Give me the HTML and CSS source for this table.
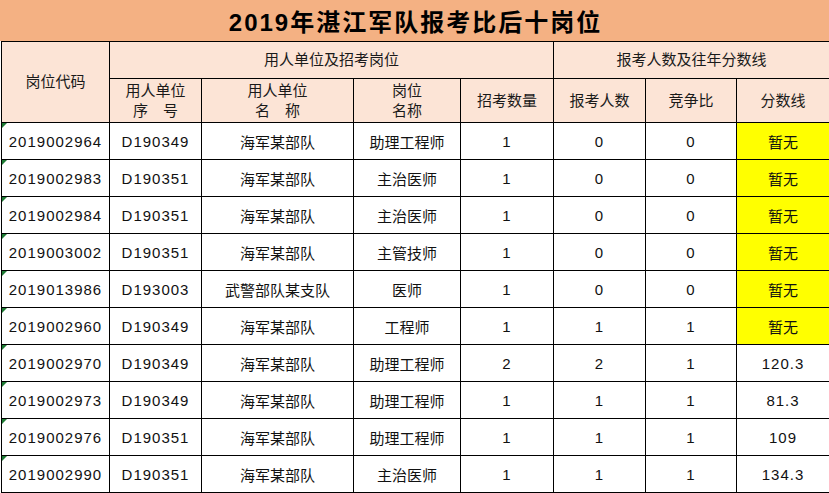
FILE: index.html
```html
<!DOCTYPE html>
<html lang="zh-CN">
<head>
<meta charset="utf-8">
<title>2019年湛江军队报考比后十岗位</title>
<link rel="stylesheet" href="styles.css">
</head>
<body>
<div class="sheet">
  <div class="title"><span class="title-text">2019年湛江军队报考比后十岗位</span></div>
  <table class="grid">
    <colgroup>
      <col class="w-code"><col class="w-seq"><col class="w-unit"><col class="w-post"><col class="w-quota"><col class="w-apply"><col class="w-ratio"><col class="w-score">
    </colgroup>
    <thead>
      <tr class="hrow1">
        <th rowspan="2">岗位代码</th>
        <th colspan="4">用人单位及招考岗位</th>
        <th colspan="3">报考人数及往年分数线</th>
      </tr>
      <tr class="hrow2">
        <th>用人单位<br>序　号</th>
        <th>用人单位<br>名　称</th>
        <th>岗位<br>名称</th>
        <th>招考数量</th>
        <th>报考人数</th>
        <th>竞争比</th>
        <th>分数线</th>
      </tr>
    </thead>
    <tbody>
      <tr><td class="code num">2019002964</td><td class="num">D190349</td><td>海军某部队</td><td>助理工程师</td><td class="num">1</td><td class="num">0</td><td class="num">0</td><td class="none">暂无</td></tr>
      <tr><td class="code num">2019002983</td><td class="num">D190351</td><td>海军某部队</td><td>主治医师</td><td class="num">1</td><td class="num">0</td><td class="num">0</td><td class="none">暂无</td></tr>
      <tr><td class="code num">2019002984</td><td class="num">D190351</td><td>海军某部队</td><td>主治医师</td><td class="num">1</td><td class="num">0</td><td class="num">0</td><td class="none">暂无</td></tr>
      <tr><td class="code num">2019003002</td><td class="num">D190351</td><td>海军某部队</td><td>主管技师</td><td class="num">1</td><td class="num">0</td><td class="num">0</td><td class="none">暂无</td></tr>
      <tr><td class="code num">2019013986</td><td class="num">D193003</td><td>武警部队某支队</td><td>医师</td><td class="num">1</td><td class="num">0</td><td class="num">0</td><td class="none">暂无</td></tr>
      <tr><td class="code num">2019002960</td><td class="num">D190349</td><td>海军某部队</td><td>工程师</td><td class="num">1</td><td class="num">1</td><td class="num">1</td><td class="none">暂无</td></tr>
      <tr><td class="code num">2019002970</td><td class="num">D190349</td><td>海军某部队</td><td>助理工程师</td><td class="num">2</td><td class="num">2</td><td class="num">1</td><td class="num">120.3</td></tr>
      <tr><td class="code num">2019002973</td><td class="num">D190349</td><td>海军某部队</td><td>助理工程师</td><td class="num">1</td><td class="num">1</td><td class="num">1</td><td class="num">81.3</td></tr>
      <tr><td class="code num">2019002976</td><td class="num">D190351</td><td>海军某部队</td><td>助理工程师</td><td class="num">1</td><td class="num">1</td><td class="num">1</td><td class="num">109</td></tr>
      <tr><td class="code num">2019002990</td><td class="num">D190351</td><td>海军某部队</td><td>主治医师</td><td class="num">1</td><td class="num">1</td><td class="num">1</td><td class="num">134.3</td></tr>
    </tbody>
  </table>
</div>
</body>
</html>
```
FILE: styles.css
```css
* { box-sizing: border-box; }
html, body { margin: 0; padding: 0; background: #ffffff; }
body {
  font-family: "Liberation Sans", "Noto Sans CJK SC", sans-serif;
  color: #111;
}
.sheet { width: 829px; }
.title {
  height: 41px;
  background: #F4B183;
  display: flex;
  align-items: center;
  justify-content: center;
}
.title-text {
  font-size: 24px;
  font-weight: bold;
  letter-spacing: 2px;
  color: #000;
  padding-left: 2px;
}
.grid {
  border-collapse: collapse;
  table-layout: fixed;
  width: 828px;
  margin-left: 1px;
}
.w-code { width: 108px; }
.w-seq { width: 92px; }
.w-unit { width: 152px; }
.w-post { width: 107px; }
.w-quota { width: 93px; }
.w-apply { width: 92px; }
.w-ratio { width: 91px; }
.w-score { width: 93px; }
.grid th, .grid td {
  border: 1px solid #000;
  padding: 0;
  text-align: center;
  vertical-align: middle;
  font-size: 15px;
  font-weight: normal;
  white-space: nowrap;
}
.grid th {
  background: #FCE4D6;
  color: #1a1a1a;
  line-height: 20px;
}
.hrow1 { height: 37px; }
.hrow2 { height: 44px; }
.grid tbody tr { height: 37px; }
.grid td { color: #111; }
.grid td.num { letter-spacing: 1px; }
.grid td.none { background: #FFFF00; }
.grid td.code { position: relative; }
.grid td.code::before {
  content: "";
  position: absolute;
  left: 0;
  top: 0;
  width: 0;
  height: 0;
  border-top: 5px solid #1E7B34;
  border-right: 5px solid transparent;
}
```
